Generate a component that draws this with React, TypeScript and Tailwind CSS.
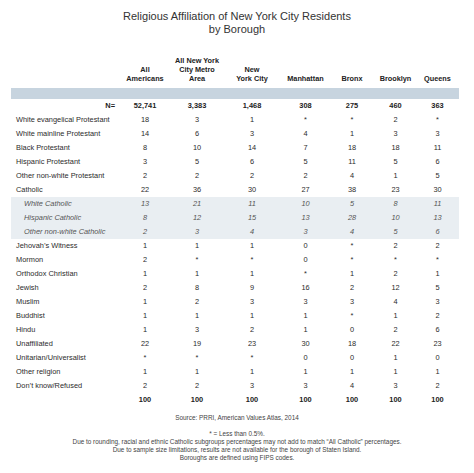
import React from "react";

type Row = { label: string; vals: string[]; kind?: "n" | "sub" | "total" };

const rows: Row[] = [
  { label: "N=", vals: ["52,741", "3,383", "1,468", "308", "275", "460", "363"], kind: "n" },
  { label: "White evangelical Protestant", vals: ["18", "3", "1", "*", "*", "2", "*"] },
  { label: "White mainline Protestant", vals: ["14", "6", "3", "4", "1", "3", "3"] },
  { label: "Black Protestant", vals: ["8", "10", "14", "7", "18", "18", "11"] },
  { label: "Hispanic Protestant", vals: ["3", "5", "6", "5", "11", "5", "6"] },
  { label: "Other non-white Protestant", vals: ["2", "2", "2", "2", "4", "1", "5"] },
  { label: "Catholic", vals: ["22", "36", "30", "27", "38", "23", "30"] },
  { label: "White Catholic", vals: ["13", "21", "11", "10", "5", "8", "11"], kind: "sub" },
  { label: "Hispanic Catholic", vals: ["8", "12", "15", "13", "28", "10", "13"], kind: "sub" },
  { label: "Other non-white Catholic", vals: ["2", "3", "4", "3", "4", "5", "6"], kind: "sub" },
  { label: "Jehovah\u2019s Witness", vals: ["1", "1", "1", "0", "*", "2", "2"] },
  { label: "Mormon", vals: ["2", "*", "*", "0", "*", "*", "*"] },
  { label: "Orthodox Christian", vals: ["1", "1", "1", "*", "1", "2", "1"] },
  { label: "Jewish", vals: ["2", "8", "9", "16", "2", "12", "5"] },
  { label: "Muslim", vals: ["1", "2", "3", "3", "3", "4", "3"] },
  { label: "Buddhist", vals: ["1", "1", "1", "1", "*", "1", "2"] },
  { label: "Hindu", vals: ["1", "3", "2", "1", "0", "2", "6"] },
  { label: "Unaffiliated", vals: ["22", "19", "23", "30", "18", "22", "23"] },
  { label: "Unitarian/Universalist", vals: ["*", "*", "*", "0", "0", "1", "0"] },
  { label: "Other religion", vals: ["1", "1", "1", "1", "1", "1", "1"] },
  { label: "Don\u2019t know/Refused", vals: ["2", "2", "3", "3", "4", "3", "2"] },
  { label: "", vals: ["100", "100", "100", "100", "100", "100", "100"], kind: "total" },
];

const headers: string[][] = [
  ["All", "Americans"],
  ["All New York", "City Metro", "Area"],
  ["New", "York City"],
  ["Manhattan"],
  ["Bronx"],
  ["Brooklyn"],
  ["Queens"],
];

const grid = "grid grid-cols-[108px_52px_52px_58px_49px_44px_43px_41px]";

export default function App() {
  return (
    <div className="w-[474px] h-[473px] bg-white text-[#2b2b2b] font-['Liberation_Sans',Arial,sans-serif] overflow-hidden">
      <div className="pt-[10px] text-center text-[11px] leading-[13px] text-[#333]">
        <div>Religious Affiliation of New York City Residents</div>
        <div>by Borough</div>
      </div>

      <div className="mx-[11px] w-[448px]">
        <div className={`${grid} mt-[20px] items-end`}>
          <div />
          {headers.map((h, i) => (
            <div key={i} className="text-center font-bold text-[7.3px] leading-[9px] text-[#222]">
              {h.map((l, j) => (
                <div key={j}>{l}</div>
              ))}
            </div>
          ))}
        </div>

        <div className="mt-[5px] h-[11px] bg-[#c7d4df]" />

        <div>
          {rows.map((r, i) => {
            const bold = r.kind === "n" || r.kind === "total";
            const sub = r.kind === "sub";
            return (
              <div
                key={i}
                className={`${grid} h-[14px] items-center text-[7.4px] leading-[14px] ${
                  sub ? "bg-[#e9eef2] italic text-[#555]" : ""
                } ${bold ? "font-bold text-[#222]" : ""}`}
              >
                <div
                  className={
                    r.kind === "n"
                      ? "text-right pr-[4px]"
                      : sub
                      ? "pl-[13px] whitespace-nowrap"
                      : "pl-[5px] whitespace-nowrap"
                  }
                >
                  {r.label}
                </div>
                {r.vals.map((v, j) => (
                  <div key={j} className="text-center">
                    {v}
                  </div>
                ))}
              </div>
            );
          })}
        </div>
      </div>

      <div className="text-center text-[6.4px] leading-[8px] text-[#444]">
        <div className="mt-[7px]">Source: PRRI, American Values Atlas, 2014</div>
        <div className="mt-[8px]">* = Less than 0.5%.</div>
        <div>Due to rounding, racial and ethnic Catholic subgroups percentages may not add to match “All Catholic” percentages.</div>
        <div>Due to sample size limitations, results are not available for the borough of Staten Island.</div>
        <div>Boroughs are defined using FIPS codes.</div>
      </div>
    </div>
  );
}
